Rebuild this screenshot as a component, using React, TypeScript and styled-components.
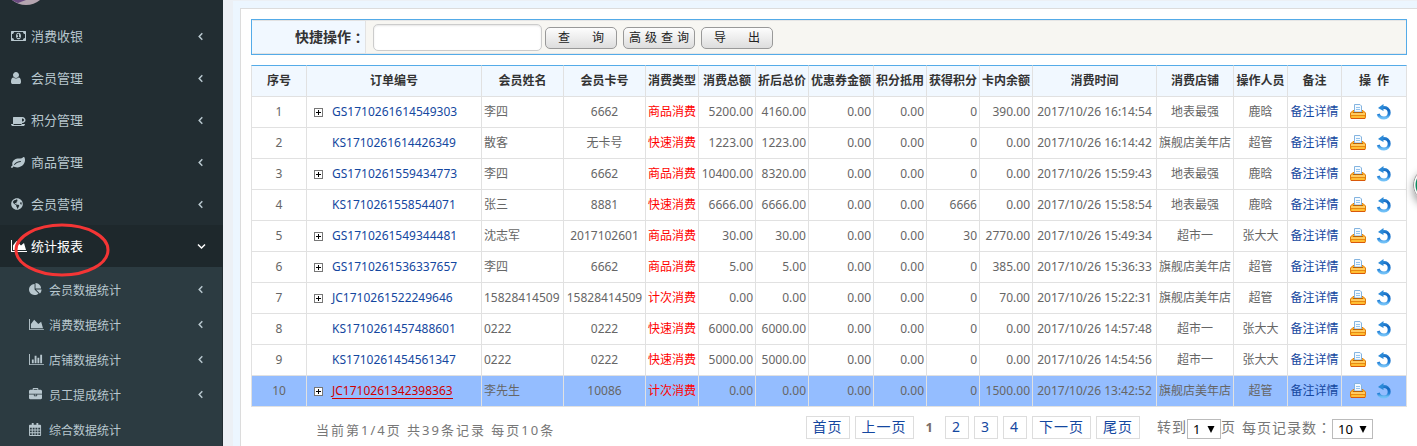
import React from 'react';
import styled, { createGlobalStyle, css } from 'styled-components';
import { FaGlobeAmericas } from 'react-icons/fa';

const GlobalStyle = createGlobalStyle`
  *, *::before, *::after { box-sizing: border-box; }
  html, body, #root { height: 100%; }
  body {
    margin: 0;
    overflow: hidden;
    background: #ecf0f5;
    color: #666;
    font: 12px/16px "Noto Sans", "Noto Sans CJK SC", sans-serif;
  }
  a { color: #1447a0; text-decoration: none; }
`;

const Page = styled.div`
  display: flex;
  height: 100%;
  overflow: hidden;
`;

const Sidebar = styled.nav`
  flex: none;
  width: 223px;
  overflow: hidden;
  background: #222d32;
  color: #b8c7ce;
`;

const Profile = styled.div`
  height: 15px;
  padding-left: 10px;
  svg { display: block; }
`;

const MenuList = styled.ul`
  margin: 0;
  padding: 0;
  list-style: none;
`;

const SubList = styled(MenuList)`
  padding: 5px 0;
  background: #2c3b41;
  border-right: 1px solid #222d32;
`;

const MenuLink = styled.a<{ $active?: boolean; $sub?: boolean }>`
  position: relative;
  display: flex;
  align-items: center;
  height: ${p => (p.$sub ? 35 : 42)}px;
  padding: 0 ${p => (p.$sub ? 19 : 20)}px 0 ${p => (p.$sub ? 29 : 11)}px;
  font-size: ${p => (p.$sub ? 12 : 13)}px;
  color: ${p => (p.$active ? '#fff' : '#b8c7ce')};
  background: ${p => (p.$active ? '#1e282c' : 'transparent')};
`;

const IconSlot = styled.span`
  display: flex;
  flex: none;
  width: 20px;
`;

const MenuText = styled.span<{ $sub?: boolean }>`
  flex: 1;
  padding: ${p => (p.$sub ? '2px 0 0' : '0')};
`;

const AngleSlot = styled.span<{ $down?: boolean }>`
  display: flex;
  margin-right: ${p => (p.$down ? -3 : 0)}px;
`;

const Highlight = styled.svg`
  position: absolute;
  left: 12px;
  top: -3px;
`;

const Main = styled.main`
  flex: 1;
  min-width: 0;
  margin: 1px 0 0 10px;
  padding: 7px 0 0 7px;
  background: #ecf6ff;
`;

const Panel = styled.section`
  min-height: 100%;
  padding: 10px 10px 0;
  background: #fff;
  border: 1px solid #dcdcdc;
  border-width: 1px 0 0 1px;
`;

const FilterBar = styled.form`
  display: flex;
  height: 36px;
  margin-bottom: 10px;
  border: 1px solid #54abe8;
  background: #f7f6f2;
`;

const FilterLabel = styled.label`
  display: flex;
  align-items: center;
  justify-content: flex-end;
  width: 114px;
  border: 1px solid #e2e2e2;
  border-left-color: #f0f8ff;
  background: #f1f8ff;
  color: #333;
  font-size: 14px;
  font-weight: 600;
`;

const Colon = styled.span`
  font-family: "Noto Sans CJK TC", sans-serif;
`;

const FilterControls = styled.div`
  display: flex;
  align-items: center;
  flex: 1;
  gap: 6px;
  padding-left: 7px;
  border-top: 1px solid #e6e6e6;
  border-bottom: 1px solid #e6e6e6;
`;

const SearchInput = styled.input`
  width: 169px;
  height: 27px;
  margin-right: -3px;
  border: 1px solid #ccc;
  border-radius: 5px;
  background: #fff;
  box-shadow: inset 0 1px 2px rgba(0, 0, 0, 0.1);
`;

const ToolButton = styled.button<{ $wide?: boolean }>`
  display: flex;
  align-items: center;
  justify-content: space-between;
  width: 72px;
  height: 22px;
  padding: 0 ${p => (p.$wide ? 5 : 12)}px;
  margin-top: 2px;
  border: 1px solid #999;
  border-radius: 5px;
  background: linear-gradient(#fdfdfd, #ddd);
  color: #222;
  font: 12px/16px "Noto Sans", "Noto Sans CJK SC", sans-serif;
`;

const Grid = styled.table`
  width: 100%;
  table-layout: fixed;
  border-spacing: 0;
  border-collapse: separate;
`;

const cell = css`
  height: 31px;
  padding: 0 2px;
  overflow: hidden;
  white-space: nowrap;
  border-right: 1px solid #e1e1e1;
  border-bottom: 1px solid #e1e1e1;
  &:first-child { border-left: 1px solid #e1e1e1; }
`;

const HeadCell = styled.th`
  ${cell}
  height: 32px;
  border-top: 1px solid #54abe8;
  background: #f1f8ff;
  color: #333;
  font-weight: 600;
  text-align: center;
`;

const Row = styled.tr<{ $selected?: boolean }>`
  background: ${p => (p.$selected ? '#94bdff' : '#fff')};
`;

const Cell = styled.td<{ $align?: 'left' | 'right' | 'center'; $red?: boolean }>`
  ${cell}
  text-align: ${p => p.$align ?? 'center'};
  ${p => p.$red && 'color: #f00;'}
`;

const OrderBox = styled.div`
  display: flex;
  align-items: center;
  padding-left: 5px;
`;

const ExpandSlot = styled.span`
  display: flex;
  width: 18px;
`;

const ExpandButton = styled.button`
  width: 9px;
  height: 9px;
  padding: 0;
  border: 0;
  background: none;
  svg { display: block; }
`;

const OrderLink = styled.a<{ $selected?: boolean }>`
  ${p => p.$selected && 'color: #d00000; border-bottom: 1px solid #d00000; line-height: 14px;'}
`;

const Actions = styled.div`
  display: flex;
  justify-content: center;
  gap: 10px;
  padding-right: 6px;
`;

const ActionButton = styled.button`
  width: 16px;
  height: 16px;
  padding: 0;
  border: 0;
  background: none;
  svg { display: block; }
`;

const Footer = styled.div`
  display: flex;
  justify-content: space-between;
  align-items: flex-start;
  padding: 8px 34px 0 65px;
  font-size: 13px;
  letter-spacing: 1px;
  color: #777;
  white-space: nowrap;
`;

const Summary = styled.div`
  padding-top: 7px;
  letter-spacing: 2px;
`;

const Pager = styled.div`
  display: flex;
  align-items: center;
  gap: 5px;
`;

const PageLink = styled.a`
  min-width: 24px;
  height: 23px;
  padding: 0 6px;
  border: 1px solid #ddd;
  font-size: 14px;
  line-height: 20px;
`;

const CurrentPage = styled.strong`
  padding: 0 6px 0 7px;
  color: #7a6e68;
`;

const Jump = styled.div`
  display: flex;
  align-items: center;
  padding-left: 12px;
  font-size: 14px;
`;

const JumpLabel = styled.label`
  display: flex;
  align-items: center;
  margin-right: 6px;
`;

const SelectBox = styled.span`
  display: flex;
  align-items: center;
  position: relative;
  margin-top: 4px;
  svg { position: absolute; right: 6px; top: 7px; pointer-events: none; }
`;

const Select = styled.select<{ $wide?: boolean }>`
  appearance: none;
  width: ${p => (p.$wide ? 41 : 34)}px;
  height: 20px;
  padding: 0 0 0 5px;
  border: 1px solid #bbb;
  border-radius: 0;
  background: #fff;
  color: #000;
  font: 13px/18px "Noto Sans", sans-serif;
`;

const FloatingBadge = styled.div`
  position: fixed;
  right: -32px;
  top: 167px;
  width: 36px;
  height: 36px;
  border: 1px solid #999;
  border-radius: 50%;
  background: radial-gradient(circle, #0f8a62 15px, #fff 16px);
  box-shadow: 0 4px 8px rgba(0, 0, 0, 0.4);
`;

const glyphs = {
  money: { box: '0 0 1920 1792', w: 15, d: 'M768 1152h384v-96h-128v-448h-114l-148 137 77 80q42-37 55-57h2v288h-128v96zm512-256q0 70-21 142t-59.5 134-101.5 101-138 39-138-39-101.5-101-59.5-134-21-142 21-142 59.5-134 101.5-101 138-39 138 39 101.5 101 59.5 134 21 142zm512 256v-512q-106 0-181-75t-75-181h-1152q0 106-75 181t-181 75v512q106 0 181 75t75 181h1152q0-106 75-181t181-75zm128-832v1152q0 26-19 45t-45 19h-1792q-26 0-45-19t-19-45v-1152q0-26 19-45t45-19h1792q26 0 45 19t19 45z' },
  user: { box: '256 0 1280 1792', w: 10, d: 'M1536 1399q0 109-62.5 187t-150.5 78h-854q-88 0-150.5-78t-62.5-187q0-85 8.5-160.5t31.5-152 58.5-131 94-89 134.5-34.5q131 128 313 128t313-128q76 0 134.5 34.5t94 89 58.5 131 31.5 152 8.5 160.5zm-256-887q0 159-112.5 271.5t-271.5 112.5-271.5-112.5-112.5-271.5 112.5-271.5 271.5-112.5 271.5 112.5 112.5 271.5z' },
  coffee: { box: '0 0 1920 1792', w: 15, d: 'M1664 896q0-80-56-136t-136-56h-64v384h64q80 0 136-56t56-136zm-1664 512h1792q0 106-75 181t-181 75h-1280q-106 0-181-75t-75-181zm1856-512q0 159-112.5 271.5t-271.5 112.5h-64v32q0 92-66 158t-158 66h-704q-92 0-158-66t-66-158v-736q0-26 19-45t45-19h1152q159 0 271.5 112.5t112.5 271.5z' },
  leaf: { box: '0 0 1792 1792', w: 14, d: 'M1280 832q0-26-19-45t-45-19q-172 0-318 49.5t-259.5 134-235.5 219.5q-19 21-19 45 0 26 19 45t45 19q24 0 45-19 27-24 74-71t67-66q137-124 268.5-176t313.5-52q26 0 45-19t19-45zm512-198q0 95-20 193-46 224-184.5 383t-357.5 268q-214 108-438 108-148 0-286-47-15-5-88-42t-96-37q-16 0-39.5 32t-45 70-52.5 70-60 32q-43 0-63.5-17.5t-45.5-59.5q-2-4-6-11t-5.5-10-3-9.5-1.5-13.5q0-35 31-73.5t68-65.5 68-56 31-48q0-4-14-38t-16-44q-9-51-9-104 0-115 43.5-220t119-184.5 170.5-139 204-95.5q55-18 145-25.5t179.5-9 178.5-6 163.5-24 113.5-56.5l29.5-29.5 29.5-28 27-20 36.5-16 43.5-4.5q39 0 70.5 46t47.5 112 24 124 8 96z' },
  area: { box: '0 0 2048 1792', w: 16, d: 'M2048 1536v128h-2048v-1536h128v1408h1920zm-384-1024l256 896h-1664v-576l448-576 576 576z' },
  bar: { box: '0 0 2048 1792', w: 16, d: 'M640 896v512h-256v-512h256zm384-512v1024h-256v-1024h256zm1024 1152v128h-2048v-1536h128v1408h1920zm-640-896v768h-256v-768h256zm384-384v1152h-256v-1152h256z' },
  pie: { box: '0 0 1792 1792', w: 14, d: 'M768 890l546 546q-106 108-247.5 168t-298.5 60q-209 0-385.5-103t-279.5-279.5-103-385.5 103-385.5 279.5-279.5 385.5-103v762zm187 6h773q0 157-60 298.5t-168 247.5zm709-128h-768v-768q209 0 385.5 103t279.5 279.5 103 385.5z' },
  briefcase: { box: '0 0 1792 1792', w: 14, d: 'M640 256h512v-128h-512v128zm1152 640v480q0 66-47 113t-113 47h-1472q-66 0-113-47t-47-113v-480h672v160q0 26 19 45t45 19h320q26 0 45-19t19-45v-160h672zm-768 0v128h-256v-128h256zm768-480v384h-1792v-384q0-66 47-113t113-47h352v-160q0-40 28-68t68-28h576q40 0 68 28t28 68v160h352q66 0 113 47t47 113z' },
  calendar: { box: '0 0 14 14', w: 14, d: 'M1 2h2V0h2v2h3V0h2v2h2q1 0 1 1v10q0 1-1 1H1q-1 0-1-1V3q0-1 1-1zM1 5v2h2V5zm3 0v2h2V5zm3 0v2h2V5zm3 0v2h2V5zM1 8v2h2V8zm3 0v2h2V8zm3 0v2h2V8zm3 0v2h2V8zM1 11v2h2v-2zm3 0v2h2v-2zm3 0v2h2v-2zm3 0v2h2v-2z' },
};

type GlyphName = keyof typeof glyphs | 'globe';

function Glyph({ name, small }: { name: GlyphName; small?: boolean }) {
  if (name === 'globe') return <FaGlobeAmericas size={12} />;
  const g = glyphs[name];
  return (
    <svg width={small ? g.w - 1 : g.w} height={small ? 13 : 14} viewBox={g.box} fill="currentColor">
      <path fillRule="evenodd" d={g.d} />
    </svg>
  );
}

function Angle({ down }: { down?: boolean }) {
  return (
    <AngleSlot $down={down}>
      <svg width={down ? 9 : 5} height={9} viewBox={down ? '0 0 9 9' : '0 0 5 9'} fill="none" stroke="currentColor" strokeWidth="1.5">
        <path d={down ? 'M1 2.500l3.500 3.500L8 2.500' : 'M4.300 1.300L1.200 4.500l3.100 3.200'} />
      </svg>
    </AngleSlot>
  );
}

function Plus() {
  return (
    <svg width="9" height="9" viewBox="0 0 9 9" shapeRendering="crispEdges">
      <rect x="0.5" y="0.5" width="8" height="8" fill="#fff" stroke="#777" />
      <path d="M2 4.5h5M4.5 2v5" stroke="#000" />
    </svg>
  );
}

function Printer() {
  return (
    <svg width="16" height="16" viewBox="0 0 16 16">
      <path d="M3 6.500h10l2.500 2.500v4.500q0 1-1 1h-13q-1 0-1-1V9z" fill="#ffad1f" stroke="#e07c0c" />
      <path d="M4.500 8v-7.500h5.500l1.500 1.500v6z" fill="#f4faff" stroke="#84b4e0" />
      <path d="M6 3.500h4M6 5.500h4" stroke="#93c4ee" />
      <path d="M3 8.500h10" stroke="#b8620a" />
      <path d="M1 10h14" stroke="#ffe9a0" />
      <path d="M1 11.500h14" stroke="#e88a10" />
      <path d="M2 13h12" stroke="#ffd04a" />
      <path d="M1 14.500h14" stroke="#d9580a" />
    </svg>
  );
}

function Undo() {
  return (
    <svg width="16" height="16" viewBox="0 0 16 16">
      <defs>
        <linearGradient id="undo" gradientUnits="userSpaceOnUse" x1="8" y1="0" x2="8" y2="16">
          <stop offset="0" stopColor="#3e9ae0" />
          <stop offset="0.35" stopColor="#1268c2" />
          <stop offset="0.65" stopColor="#2380d6" />
          <stop offset="0.85" stopColor="#6bbcf5" />
          <stop offset="1" stopColor="#7cc8fa" />
        </linearGradient>
      </defs>
      <path d="M6.500 3.600C10.500 2.800 13.200 5.200 13.200 8.800C13.200 11.800 11 14 8 14C5 14 3 12.500 2.200 10" fill="none" stroke="url(#undo)" strokeWidth="3" />
      <path d="M2 4L7.500 0V7z" fill="#2b8ad8" />
    </svg>
  );
}

const menu: { icon: GlyphName; text: string; active?: boolean }[] = [
  { icon: 'money', text: '消费收银' },
  { icon: 'user', text: '会员管理' },
  { icon: 'coffee', text: '积分管理' },
  { icon: 'leaf', text: '商品管理' },
  { icon: 'globe', text: '会员营销' },
  { icon: 'area', text: '统计报表', active: true },
];

const submenu: { icon: GlyphName; text: string; leaf?: boolean }[] = [
  { icon: 'pie', text: '会员数据统计' },
  { icon: 'area', text: '消费数据统计' },
  { icon: 'bar', text: '店铺数据统计' },
  { icon: 'briefcase', text: '员工提成统计' },
  { icon: 'calendar', text: '综合数据统计', leaf: true },
];

const columns: [string, number][] = [
  ['序号', 56], ['订单编号', 175], ['会员姓名', 82], ['会员卡号', 82], ['消费类型', 53],
  ['消费总额', 57], ['折后总价', 53], ['优惠券金额', 65], ['积分抵用', 53], ['获得积分', 53],
  ['卡内余额', 53], ['消费时间', 124], ['消费店铺', 77], ['操作人员', 54], ['备注', 54], ['操\u00a0\u00a0作', 65],
];

const orders = [
  ['GS1710261614549303', '李四', '6662', '商品消费', '5200.00', '4160.00', '0', '390.00', '16:14:54', '地表最强', '鹿晗'],
  ['KS1710261614426349', '散客', '无卡号', '快速消费', '1223.00', '1223.00', '0', '0.00', '16:14:42', '旗舰店美年店', '超管'],
  ['GS1710261559434773', '李四', '6662', '商品消费', '10400.00', '8320.00', '0', '0.00', '15:59:43', '地表最强', '鹿晗'],
  ['KS1710261558544071', '张三', '8881', '快速消费', '6666.00', '6666.00', '6666', '0.00', '15:58:54', '地表最强', '鹿晗'],
  ['GS1710261549344481', '沈志军', '2017102601', '商品消费', '30.00', '30.00', '30', '2770.00', '15:49:34', '超市一', '张大大'],
  ['GS1710261536337657', '李四', '6662', '商品消费', '5.00', '5.00', '0', '385.00', '15:36:33', '旗舰店美年店', '超管'],
  ['JC1710261522249646', '15828414509', '15828414509', '计次消费', '0.00', '0.00', '0', '70.00', '15:22:31', '旗舰店美年店', '超管'],
  ['KS1710261457488601', '0222', '0222', '快速消费', '6000.00', '6000.00', '0', '0.00', '14:57:48', '超市一', '张大大'],
  ['KS1710261454561347', '0222', '0222', '快速消费', '5000.00', '5000.00', '0', '0.00', '14:54:56', '超市一', '张大大'],
  ['JC1710261342398363', '李先生', '10086', '计次消费', '0.00', '0.00', '0', '1500.00', '13:42:52', '旗舰店美年店', '超管'],
];

function Arrow() {
  return <svg width="8" height="7" viewBox="0 0 8 7"><path d="M0.500 0h7L4 7z" fill="#000" /></svg>;
}

export default function App() {
  return (
    <>
      <GlobalStyle />
      <Page>
        <Sidebar>
          <Profile>
            <svg width="34" height="6" viewBox="0 0 34 6">
              <path d="M2 0Q8 5 16 5T30 0z" fill="#b5a5b0" />
              <path d="M2 0Q5 2 8 3L16 0z" fill="#6b4a80" />
            </svg>
          </Profile>
          <MenuList>
            {menu.map(m => (
              <li key={m.text}>
                <MenuLink href="#" $active={m.active}>
                  <IconSlot><Glyph name={m.icon} /></IconSlot>
                  <MenuText>{m.text}</MenuText>
                  <Angle down={m.active} />
                  {m.active && (
                    <Highlight width="100" height="56" viewBox="0 0 100 56">
                      <ellipse cx="50" cy="28" rx="46" ry="25" fill="none" stroke="#f43535" strokeWidth="3" />
                    </Highlight>
                  )}
                </MenuLink>
                {m.active && (
                  <SubList>
                    {submenu.map(s => (
                      <li key={s.text}>
                        <MenuLink href="#" $sub>
                          <IconSlot><Glyph name={s.icon} small /></IconSlot>
                          <MenuText $sub>{s.text}</MenuText>
                          {!s.leaf && <Angle />}
                        </MenuLink>
                      </li>
                    ))}
                  </SubList>
                )}
              </li>
            ))}
          </MenuList>
        </Sidebar>
        <Main>
          <Panel>
            <FilterBar>
              <FilterLabel htmlFor="quick">快捷操作<Colon>：</Colon></FilterLabel>
              <FilterControls>
                <SearchInput id="quick" type="text" />
                <ToolButton type="button"><span>查</span><span>询</span></ToolButton>
                <ToolButton type="button" $wide><span>高</span><span>级</span><span>查</span><span>询</span></ToolButton>
                <ToolButton type="button"><span>导</span><span>出</span></ToolButton>
              </FilterControls>
            </FilterBar>
            <Grid>
              <colgroup>{columns.map(([name, width]) => <col key={name} width={width} />)}</colgroup>
              <thead>
                <tr>{columns.map(([name]) => <HeadCell key={name} scope="col">{name}</HeadCell>)}</tr>
              </thead>
              <tbody>
                {orders.map(([id, name, card, kind, total, net, points, balance, time, shop, staff], i) => {
                  const selected = i === 9;
                  return (
                    <Row key={id} $selected={selected}>
                      <Cell>{i + 1}</Cell>
                      <Cell $align="left">
                        <OrderBox>
                          <ExpandSlot>
                            {!id.startsWith('KS') && <ExpandButton type="button" aria-label="展开"><Plus /></ExpandButton>}
                          </ExpandSlot>
                          <OrderLink href="#" $selected={selected}>{id}</OrderLink>
                        </OrderBox>
                      </Cell>
                      <Cell $align="left">{name}</Cell>
                      <Cell>{card}</Cell>
                      <Cell $red>{kind}</Cell>
                      <Cell $align="right">{total}</Cell>
                      <Cell $align="right">{net}</Cell>
                      <Cell $align="right">0.00</Cell>
                      <Cell $align="right">0.00</Cell>
                      <Cell $align="right">{points}</Cell>
                      <Cell $align="right">{balance}</Cell>
                      <Cell>2017/10/26 {time}</Cell>
                      <Cell>{shop}</Cell>
                      <Cell>{staff}</Cell>
                      <Cell><a href="#">备注详情</a></Cell>
                      <Cell>
                        <Actions>
                          <ActionButton type="button" aria-label="打印"><Printer /></ActionButton>
                          <ActionButton type="button" aria-label="撤销"><Undo /></ActionButton>
                        </Actions>
                      </Cell>
                    </Row>
                  );
                })}
              </tbody>
            </Grid>
            <Footer>
              <Summary>当前第1/4页 共39条记录 每页10条</Summary>
              <Pager>
                <PageLink href="#">首页</PageLink>
                <PageLink href="#">上一页</PageLink>
                <CurrentPage>1</CurrentPage>
                <PageLink href="#">2</PageLink>
                <PageLink href="#">3</PageLink>
                <PageLink href="#">4</PageLink>
                <PageLink href="#">下一页</PageLink>
                <PageLink href="#">尾页</PageLink>
                <Jump>
                  <JumpLabel>
                    转到
                    <SelectBox><Select defaultValue="1"><option>1</option><option>2</option><option>3</option><option>4</option></Select><Arrow /></SelectBox>
                    页
                  </JumpLabel>
                  <label htmlFor="size">每页记录数<Colon>：</Colon></label>
                  <SelectBox><Select id="size" $wide defaultValue="10"><option>10</option><option>20</option></Select><Arrow /></SelectBox>
                </Jump>
              </Pager>
            </Footer>
          </Panel>
        </Main>
      </Page>
      <FloatingBadge />
    </>
  );
}
